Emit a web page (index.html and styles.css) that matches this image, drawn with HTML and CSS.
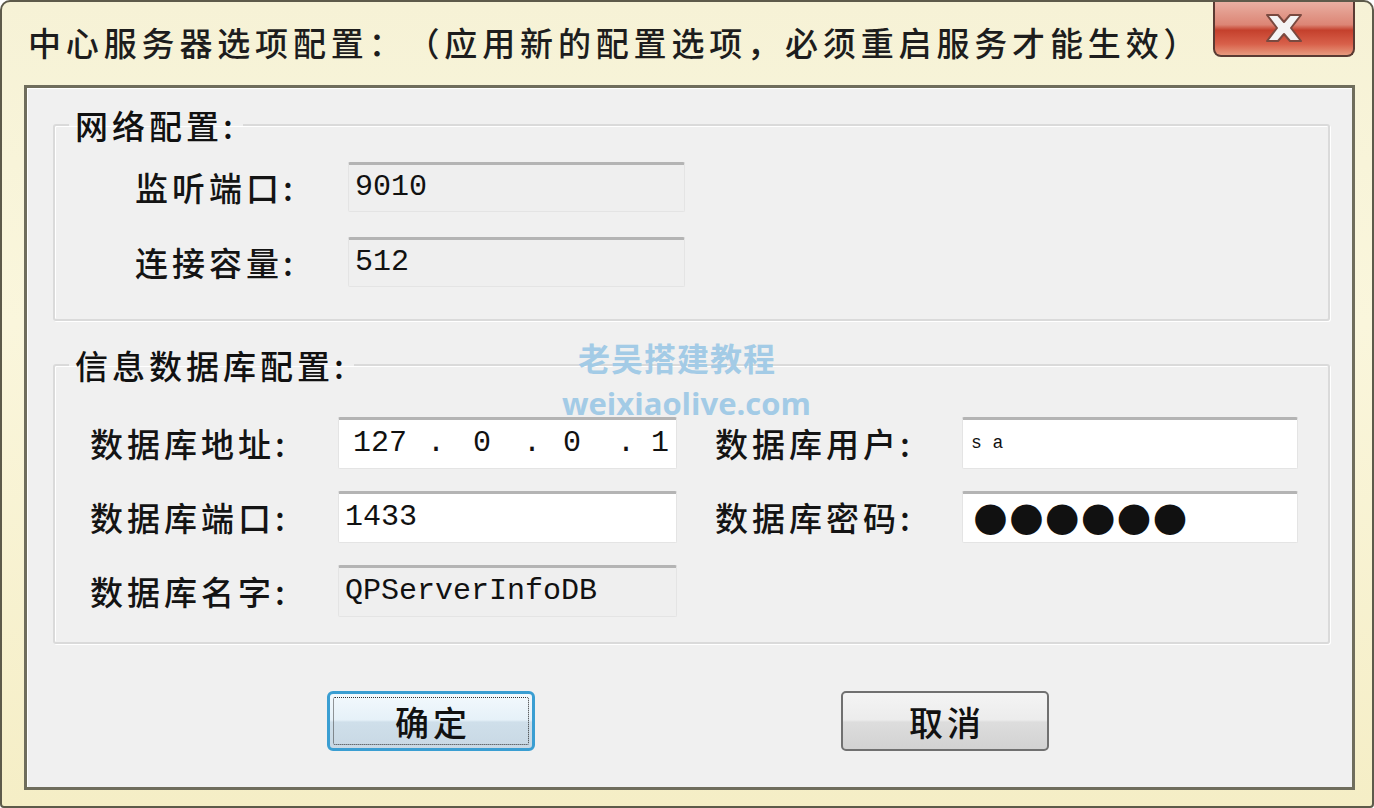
FILE: index.html
```html
<!DOCTYPE html>
<html lang="zh-CN">
<head>
<meta charset="utf-8">
<title>中心服务器选项配置</title>
<link rel="stylesheet" href="styles.css">
</head>
<body>
<div class="window">
  <div class="titlebar">
    <div class="title">中心服务器选项配置：（应用新的配置选项，必须重启服务才能生效）</div>
    <div class="close">
      <svg width="46" height="32" viewBox="0 0 46 32">
        <path d="M6 3 L17 3 L23 10 L29 3 L40 3 L30 16 L40 29 L29 29 L23 22 L17 29 L6 29 L16 16 Z" fill="#f4f4f4" stroke="#7a4a40" stroke-width="2" stroke-linejoin="round"/>
      </svg>
    </div>
  </div>
  <div class="client">
    <fieldset class="group group-net">
      <legend class="legend">网络配置:</legend>
      <div class="group-body">
        <div class="row">
          <span class="label label-net">监听端口:</span>
          <div class="field disabled">9010</div>
        </div>
        <div class="row">
          <span class="label label-net">连接容量:</span>
          <div class="field disabled">512</div>
        </div>
      </div>
    </fieldset>
    <fieldset class="group group-db">
      <legend class="legend">信息数据库配置:</legend>
      <div class="grid">
        <span class="label c1">数据库地址:</span>
        <div class="field ip c2"><span>127</span><span>.</span><span>0</span><span>.</span><span>0</span><span>.</span><span>1</span></div>
        <span class="label c3">数据库用户:</span>
        <div class="field small c4">s a</div>
        <span class="label c1">数据库端口:</span>
        <div class="field c2">1433</div>
        <span class="label c3">数据库密码:</span>
        <div class="field dots c4">●●●●●●</div>
        <span class="label c1">数据库名字:</span>
        <div class="field disabled c2">QPServerInfoDB</div>
      </div>
    </fieldset>
    <div class="buttons">
      <button class="btn btn-ok"><span class="focus">确定</span></button>
      <button class="btn btn-cancel">取消</button>
    </div>
  </div>
  <div class="watermark">
    <div class="wm-cn">老吴搭建教程</div>
    <div class="wm-en">weixiaolive.com</div>
  </div>
</div>
</body>
</html>
```
FILE: styles.css
```css
html, body {
  margin: 0;
  padding: 0;
  background: #ffffff;
}
body {
  font-family: "Noto Sans CJK SC", "Noto Sans", sans-serif;
  color: #111;
  text-spacing-trim: space-all;
}
.window {
  position: relative;
  width: 1374px;
  height: 808px;
  box-sizing: border-box;
  display: flex;
  flex-direction: column;
  border-radius: 10px 10px 4px 4px;
  border: 2px solid #5d5a4a;
  background: linear-gradient(180deg, #f6f2d6 0%, #faf6dc 40%, #f5eec6 100%);
  overflow: hidden;
}
.titlebar {
  height: 83px;
  display: flex;
  align-items: flex-start;
  flex: none;
}
.title {
  margin-left: 26px;
  margin-top: 19px;
  font-size: 33px;
  font-weight: 500;
  line-height: 42px;
  letter-spacing: 4.85px;
  color: #1d1d1d;
  white-space: nowrap;
  text-spacing-trim: space-all;
}
.close {
  margin-left: auto;
  margin-right: 17px;
  margin-top: -2px;
  width: 142px;
  height: 57px;
  box-sizing: border-box;
  border: 2px solid #5a3b33;
  border-top: none;
  border-radius: 0 0 8px 8px;
  background: linear-gradient(180deg, #eab3a6 0%, #dc8575 45%, #c4402c 55%, #d8604a 80%, #e79a7e 100%);
  display: flex;
  align-items: center;
  justify-content: center;
}
.client {
  flex: 1;
  margin: 0 17px 16px 22px;
  border: 3px solid #6f6d5c;
  background: #f0f0f0;
  box-shadow: inset 1px 1px 0 #ffffff;
  padding: 17px 22px 0 26px;
  display: flex;
  flex-direction: column;
}
.group {
  margin: 0;
  padding: 0 0 0 14px;
  border: 2px solid #dadada;
  border-radius: 3px;
  box-shadow: inset 1px 1px 0 #ffffff, 1px 1px 0 #ffffff;
  min-width: 0;
}
.legend {
  margin: 0;
  padding: 0 6px;
  font-size: 33px;
  font-weight: 500;
  line-height: 40px;
  letter-spacing: 4px;
  color: #111;
}
.group-net .group-body {
  padding: 17px 0 32px 66px;
}
.row {
  display: flex;
  align-items: center;
  height: 50px;
}
.row + .row {
  margin-top: 25px;
}
.label {
  font-size: 33px;
  font-weight: 500;
  line-height: 40px;
  letter-spacing: 4px;
  color: #141414;
  white-space: nowrap;
}
.label-net {
  width: 213px;
}
.field {
  box-sizing: border-box;
  height: 52px;
  background: #ffffff;
  border: 1px solid #e4e4e4;
  border-top: 3px solid #b4b4b4;
  border-radius: 2px;
  font-family: "Liberation Mono", "DejaVu Sans Mono", monospace;
  font-size: 30px;
  line-height: 46px;
  padding: 0 6px;
  color: #111;
  white-space: nowrap;
}
.row .field {
  width: 337px;
  height: 50px;
  line-height: 44px;
}
.field.disabled {
  background: #efefef;
}
.group-db {
  margin-top: 24px;
}
.grid {
  display: grid;
  grid-template-columns: 248px 339px 38px 247px 336px;
  row-gap: 22px;
  align-items: center;
  padding: 32px 0 25px 21px;
}
.c1 { grid-column: 1; }
.c2 { grid-column: 2; }
.c3 { grid-column: 4; }
.c4 { grid-column: 5; }
.ip {
  display: flex;
  padding-left: 14px;
}
.ip span:nth-child(1) { width: 74px; }
.ip span:nth-child(2) { width: 46px; }
.ip span:nth-child(3) { width: 50px; }
.ip span:nth-child(4) { width: 40px; }
.ip span:nth-child(5) { width: 54px; }
.ip span:nth-child(6) { width: 34px; }
.small {
  font-size: 18px;
  padding-left: 8px;
}
.dots {
  font-family: "DejaVu Sans", sans-serif;
  font-size: 40px;
  line-height: 44px;
  letter-spacing: 1px;
  padding-left: 10px;
}
.buttons {
  display: flex;
  margin-top: 47px;
  padding-left: 274px;
  gap: 306px;
}
.btn {
  width: 208px;
  height: 60px;
  box-sizing: border-box;
  font-family: "Noto Sans CJK SC", sans-serif;
  font-size: 34px;
  font-weight: 500;
  letter-spacing: 4px;
  color: #111;
  padding: 0;
  cursor: default;
}
.btn-ok {
  border: 3px solid #3a9ed2;
  border-radius: 6px;
  background: linear-gradient(180deg, #f3f9fd 0%, #e6f1f8 48%, #cfdfea 52%, #c8d8e4 100%);
  padding: 3px;
}
.focus {
  display: flex;
  align-items: center;
  justify-content: center;
  height: 100%;
  box-sizing: border-box;
  border: 1px dotted #333;
  border-radius: 2px;
  padding-left: 4px;
}
.btn-cancel {
  border: 2px solid #707070;
  border-radius: 5px;
  background: linear-gradient(180deg, #f4f4f4 0%, #ececec 48%, #dddddd 52%, #d2d2d2 100%);
  padding-left: 4px;
}
.watermark {
  position: absolute;
  left: 560px;
  top: 335px;
  color: #a3cbe6;
  font-weight: 700;
  pointer-events: none;
}
.wm-cn {
  font-size: 32px;
  line-height: 40px;
  letter-spacing: 1px;
  padding-left: 16px;
}
.wm-en {
  font-family: "Open Sans", "DejaVu Sans", sans-serif;
  font-size: 31px;
  line-height: 38px;
  margin-top: 7px;
}
```
